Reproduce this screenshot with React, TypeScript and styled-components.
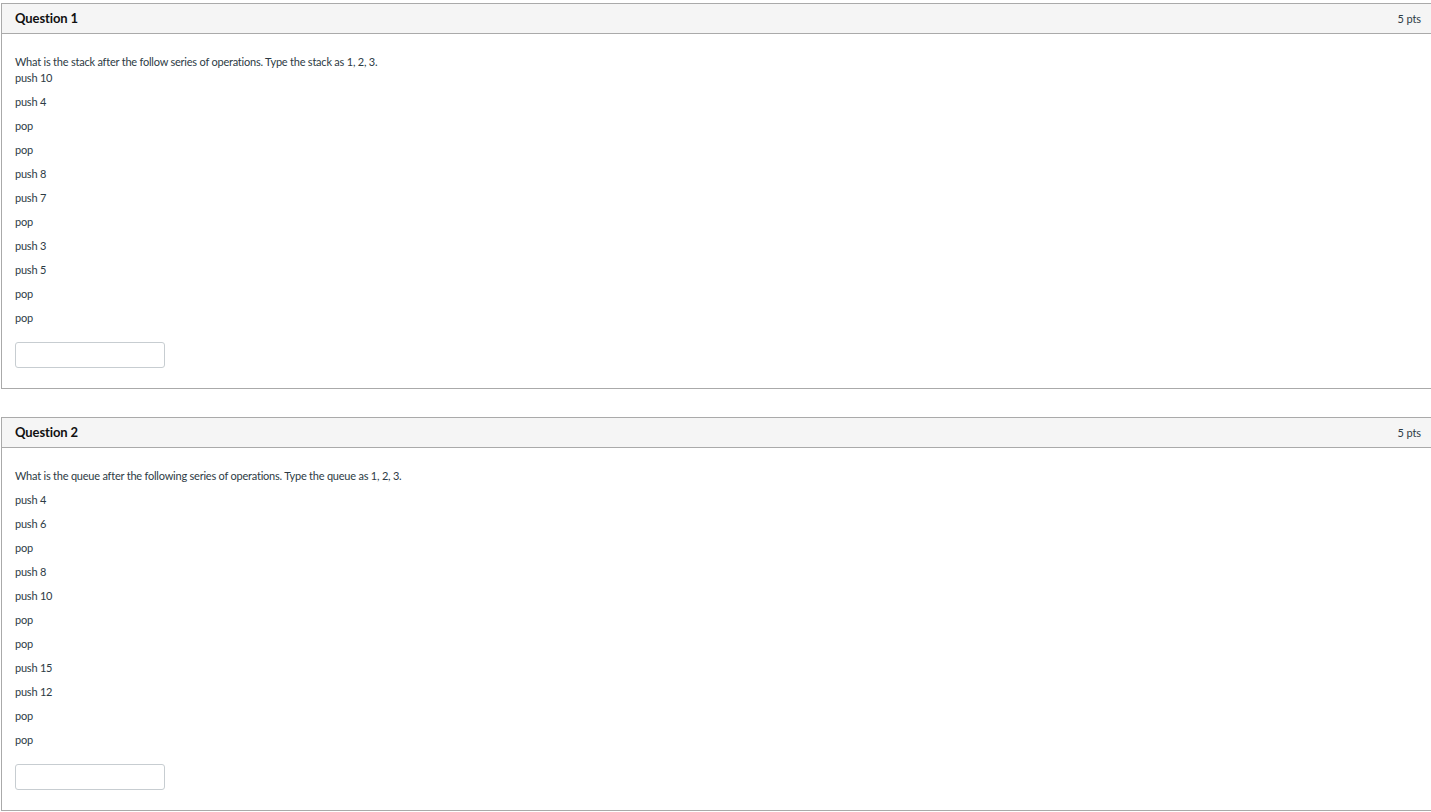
import React from "react";
import styled, { createGlobalStyle } from "styled-components";

const GlobalStyle = createGlobalStyle`
  html, body {
    margin: 0;
    padding: 0;
    background: #ffffff;
    overflow: hidden;
  }
  body {
    font-family: Lato, "Open Sans", "Liberation Sans", sans-serif;
    color: #2d3b45;
  }
`;

const Page = styled.div`
  display: flex;
  flex-direction: column;
  gap: 28px;
  padding: 3px 0 0 1px;
  width: 1431px;
`;

const Card = styled.section`
  border: 1px solid #aaaaaa;
  background: #ffffff;
  box-sizing: border-box;
  width: 1431px;
`;

const Header = styled.header`
  display: flex;
  align-items: center;
  justify-content: space-between;
  height: 29px;
  padding: 0 10px 0 13px;
  background: #f5f5f5;
  border-bottom: 1px solid #aaaaaa;
`;

const Title = styled.h2`
  margin: 0 0 1px;
  font-size: 13px;
  font-weight: 700;
  letter-spacing: -0.1px;
  color: #111111;
`;

const Points = styled.span`
  font-size: 11px;
  letter-spacing: -0.1px;
  color: #2d3b45;
`;

const Body = styled.div`
  display: flex;
  flex-direction: column;
  align-items: flex-start;
  padding: 20px 13px;
`;

const Para = styled.p`
  margin: 0 0 8px;
  font-size: 11px;
  line-height: 16px;
  letter-spacing: -0.22px;
  color: #2d3b45;
`;

const AnswerInput = styled.input`
  display: block;
  box-sizing: border-box;
  margin-top: 8px;
  width: 150px;
  height: 26px;
  border: 1px solid #c7cdd1;
  border-radius: 3px;
  background: #fff;
  padding: 0 6px;
  font-family: inherit;
  font-size: 12px;
`;

type Q = {
  title: string;
  prompt: string;
  inline?: string;
  ops: string[];
};

const questions: Q[] = [
  {
    title: "Question 1",
    prompt: "What is the stack after the follow series of operations. Type the stack as 1, 2, 3.",
    inline: "push 10",
    ops: ["push 4", "pop", "pop", "push 8", "push 7", "pop", "push 3", "push 5", "pop", "pop"],
  },
  {
    title: "Question 2",
    prompt: "What is the queue after the following series of operations. Type the queue as 1, 2, 3.",
    ops: ["push 4", "push 6", "pop", "push 8", "push 10", "pop", "pop", "push 15", "push 12", "pop", "pop"],
  },
];

export default function App() {
  return (
    <>
      <GlobalStyle />
      <Page>
        {questions.map((q) => (
          <Card key={q.title}>
            <Header>
              <Title>{q.title}</Title>
              <Points>5 pts</Points>
            </Header>
            <Body>
              <Para>
                {q.prompt}
                {q.inline && (
                  <>
                    <br />
                    {q.inline}
                  </>
                )}
              </Para>
              {q.ops.map((op, i) => (
                <Para key={i}>{op}</Para>
              ))}
              <AnswerInput type="text" aria-label={`${q.title} answer`} />
            </Body>
          </Card>
        ))}
      </Page>
    </>
  );
}
